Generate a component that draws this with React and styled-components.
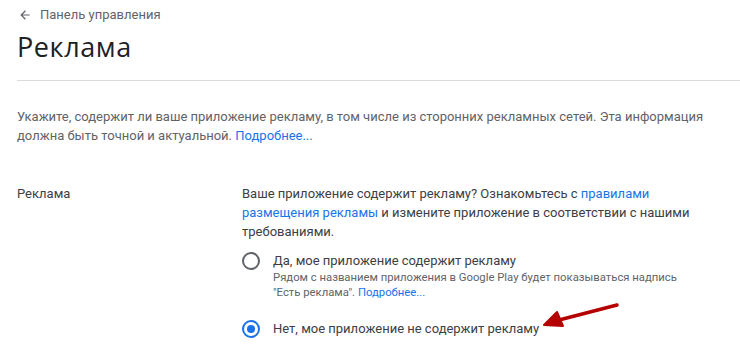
import React from "react";
import styled, { createGlobalStyle } from "styled-components";

const Global = createGlobalStyle`
  html, body { margin: 0; padding: 0; background: #fff; }
  body { font-family: Roboto, "Noto Sans", Arial, sans-serif; color: #3c4043; }
  * { box-sizing: border-box; }
`;

const Page = styled.div`
  position: relative;
  width: 740px;
  height: 359px;
  overflow: hidden;
  padding-left: 17px;
`;

const Breadcrumb = styled.div`
  display: flex;
  align-items: center;
  gap: 8px;
  padding-top: 5px;
  height: 25px;
  font-size: 13px;
  line-height: 20px;
  color: #5f6368;
  padding-left: 1px;
`;

const Title = styled.h1`
  margin: 5px 0 0 0;
  font-family: "Open Sans", Roboto, sans-serif;
  font-weight: 400;
  font-size: 27px;
  line-height: 34px;
  color: #202124;
  letter-spacing: 0.6px;
`;

const Divider = styled.hr`
  margin: 16px 0 0 0;
  border: 0;
  border-top: 1px solid #dadce0;
`;

const Intro = styled.p`
  margin: 26px 0 0 0;
  font-size: 13px;
  line-height: 19px;
  color: #5f6368;
  max-width: 712px;
`;

const Link = styled.a`
  color: #1a73e8;
  text-decoration: none;
`;

const Row = styled.div`
  display: grid;
  grid-template-columns: 225px 460px;
  margin-top: 39px;
`;

const Label = styled.div`
  font-size: 13px;
  line-height: 19px;
  color: #3c4043;
`;

const Question = styled.div`
  font-size: 13px;
  line-height: 19px;
  color: #3c4043;
`;

const Options = styled.div`
  display: flex;
  flex-direction: column;
  gap: 20px;
  margin-top: 11px;
`;

const Option = styled.label`
  display: grid;
  grid-template-columns: 18px 1fr;
  column-gap: 13px;
  align-items: start;
`;

const Radio = styled.span`
  width: 18px;
  height: 18px;
  border-radius: 50%;
  border: 2px solid ${(p) => (p.$checked ? "#1a73e8" : "#5f6368")};
  display: flex;
  align-items: center;
  justify-content: center;
  &::after {
    content: "";
    width: 8px;
    height: 8px;
    border-radius: 50%;
    background: ${(p) => (p.$checked ? "#1a73e8" : "transparent")};
  }
`;

const OptionText = styled.div`
  font-size: 13px;
  line-height: 17px;
  color: #3c4043;
`;

const Hint = styled.div`
  font-size: 11.3px;
  line-height: 15px;
  color: #5f6368;
  margin-top: 1px;
`;

const Arrow = styled.svg`
  position: absolute;
  left: 533px;
  top: 295px;
`;

export default function App() {
  return (
    <Page>
      <Global />
      <Breadcrumb>
        <svg width="14" height="14" viewBox="0 0 24 24" fill="#5f6368">
          <path d="M20 11H7.83l5.59-5.59L12 4l-8 8 8 8 1.41-1.41L7.83 13H20v-2z" />
        </svg>
        Панель управления
      </Breadcrumb>
      <Title>Реклама</Title>
      <Divider />
      <Intro>
        Укажите, содержит ли ваше приложение рекламу, в том числе из сторонних рекламных сетей. Эта информация
        должна быть точной и актуальной. <Link>Подробнее...</Link>
      </Intro>
      <Row>
        <Label>Реклама</Label>
        <div>
          <Question>
            Ваше приложение содержит рекламу? Ознакомьтесь с <Link>правилами размещения рекламы</Link> и измените
            приложение в соответствии с нашими требованиями.
          </Question>
          <Options>
            <Option>
              <Radio />
              <div>
                <OptionText>Да, мое приложение содержит рекламу</OptionText>
                <Hint>
                  Рядом с названием приложения в Google Play будет показываться надпись "Есть реклама".{" "}
                  <Link>Подробнее...</Link>
                </Hint>
              </div>
            </Option>
            <Option>
              <Radio $checked />
              <OptionText>Нет, мое приложение не содержит рекламу</OptionText>
            </Option>
          </Options>
        </div>
      </Row>
      <Arrow width="100" height="40" viewBox="0 0 100 40">
        <path d="M84 10 L26 25" stroke="#b50000" strokeWidth="3.5" strokeLinecap="round" fill="none" />
        <path d="M11 30 L24 17 L30 31 Z" fill="#b50000" stroke="#b50000" strokeWidth="2" strokeLinejoin="round" />
      </Arrow>
    </Page>
  );
}
